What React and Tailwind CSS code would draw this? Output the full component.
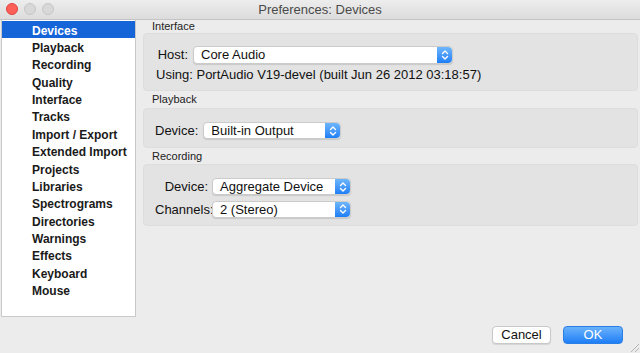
import React from 'react';

const sections = [
  'Devices', 'Playback', 'Recording', 'Quality', 'Interface', 'Tracks',
  'Import / Export', 'Extended Import', 'Projects', 'Libraries', 'Spectrograms',
  'Directories', 'Warnings', 'Effects', 'Keyboard', 'Mouse',
];

function Stepper() {
  return (
    <div className="w-[15px] self-stretch rounded-r-[4px] bg-gradient-to-b from-[#6db6fc] to-[#1c7ef6] flex items-center justify-center">
      <svg width="8" height="12" viewBox="0 0 8 12" fill="none" stroke="white" strokeWidth="1.4" strokeLinecap="round" strokeLinejoin="round">
        <path d="M1.5 4.5 L4 2 L6.5 4.5" />
        <path d="M1.5 7.5 L4 10 L6.5 7.5" />
      </svg>
    </div>
  );
}

function Select({ value, width, height = 'h-[18px]' }) {
  return (
    <div className={`${width} ${height} flex items-stretch bg-white rounded-[4px] border border-[#cbcbcb] shadow-[0_1px_1px_rgba(0,0,0,0.12)]`}>
      <div className="flex-1 flex items-center pl-[7px] text-[13px] text-[#111]">{value}</div>
      <Stepper />
    </div>
  );
}

function GroupLabel({ children, h }) {
  return (
    <div className={`${h} flex items-center pl-[9px] text-[11px] text-[#222]`}>{children}</div>
  );
}

export default function App() {
  return (
    <div className="relative w-[640px] h-[353px] bg-[#ececec] overflow-hidden text-[#111]" style={{ fontFamily: '"Liberation Sans", Arial, sans-serif' }}>
      {/* Title bar */}
      <div className="relative h-[20px] bg-gradient-to-b from-[#ededed] to-[#dcdcdc] border-b border-[#c4c4c4] flex items-center justify-center">
        <div className="absolute left-[6px] top-[3px] flex gap-[6px]">
          <span className="w-[12px] h-[12px] rounded-full bg-[#fc5f57] border border-[#e0443e]" />
          <span className="w-[12px] h-[12px] rounded-full bg-[#d8d8d8] border border-[#c6c6c6]" />
          <span className="w-[12px] h-[12px] rounded-full bg-[#d8d8d8] border border-[#c6c6c6]" />
        </div>
        <span className="text-[13px] text-[#4a4a4a]">Preferences: Devices</span>
      </div>

      <div className="flex h-[297px]">
        {/* Sidebar list */}
        <div className="ml-[1px] w-[135px] h-full bg-white border border-t-0 border-[#c9c9c9] pt-[1px]">
          {sections.map((s, i) => (
            <div
              key={s}
              className={`h-[17.37px] flex items-center pt-[2px] pl-[30px] text-[12px] font-bold ${i === 0 ? 'bg-[#1665d8] text-white' : 'text-[#1a1a1a]'}`}
            >
              {s}
            </div>
          ))}
        </div>

        {/* Right side */}
        <div className="ml-[7px] w-[495px] flex flex-col">
          <GroupLabel h="h-[13px]">Interface</GroupLabel>
          <div className="h-[58px] bg-[#e3e3e3] rounded-[4px] border border-[#dddddd] pt-[11px]">
            <div className="flex items-center pl-[12px] gap-[5px]">
              <span className="w-[32px] text-right text-[13px]">Host:</span>
              <Select value="Core Audio" width="w-[260px]" />
            </div>
            <div className="mt-[3px] pl-[12px] text-[13px] leading-[14px]">
              Using: PortAudio V19-devel (built Jun 26 2012 03:18:57)
            </div>
          </div>

          <GroupLabel h="h-[17px]">Playback</GroupLabel>
          <div className="h-[40px] bg-[#e3e3e3] rounded-[4px] border border-[#dddddd] pt-[12px]">
            <div className="flex items-center pl-[11px] gap-[5px]">
              <span className="text-[13px]">Device:</span>
              <Select value="Built-in Output" width="w-[138px]" height="h-[17px]" />
            </div>
          </div>

          <GroupLabel h="h-[16px]">Recording</GroupLabel>
          <div className="h-[62px] bg-[#e3e3e3] rounded-[4px] border border-[#dddddd] pt-[12px] flex flex-col gap-[3px]">
            <div className="flex items-center pl-[11px] gap-[4px]">
              <span className="w-[53px] text-right text-[13px]">Device:</span>
              <Select value="Aggregate Device" width="w-[139px]" height="h-[17px]" />
            </div>
            <div className="flex items-center pl-[11px] gap-[4px]">
              <span className="w-[53px] text-right text-[13px]">Channels:</span>
              <Select value="2 (Stereo)" width="w-[139px]" height="h-[17px]" />
            </div>
          </div>
        </div>
      </div>

      {/* Footer buttons */}
      <div className="flex justify-end gap-[12px] pr-[17px] pt-[9px]">
        <button className="w-[59px] h-[18px] bg-white rounded-[4px] border border-[#c8c8c8] shadow-[0_1px_1px_rgba(0,0,0,0.1)] text-[13px] text-[#111] flex items-center justify-center">
          Cancel
        </button>
        <button className="w-[60px] h-[18px] rounded-[4px] bg-gradient-to-b from-[#69b1fb] to-[#1b7ef6] border border-[#2a7fe6] text-[13px] text-white flex items-center justify-center">
          OK
        </button>
      </div>

      {/* Resize grip */}
      <svg className="absolute right-[1px] bottom-[1px]" width="10" height="10" viewBox="0 0 10 10" stroke="#b5b5b5" strokeWidth="1">
        <path d="M2 10 L10 2" />
        <path d="M6 10 L10 6" />
      </svg>
    </div>
  );
}
